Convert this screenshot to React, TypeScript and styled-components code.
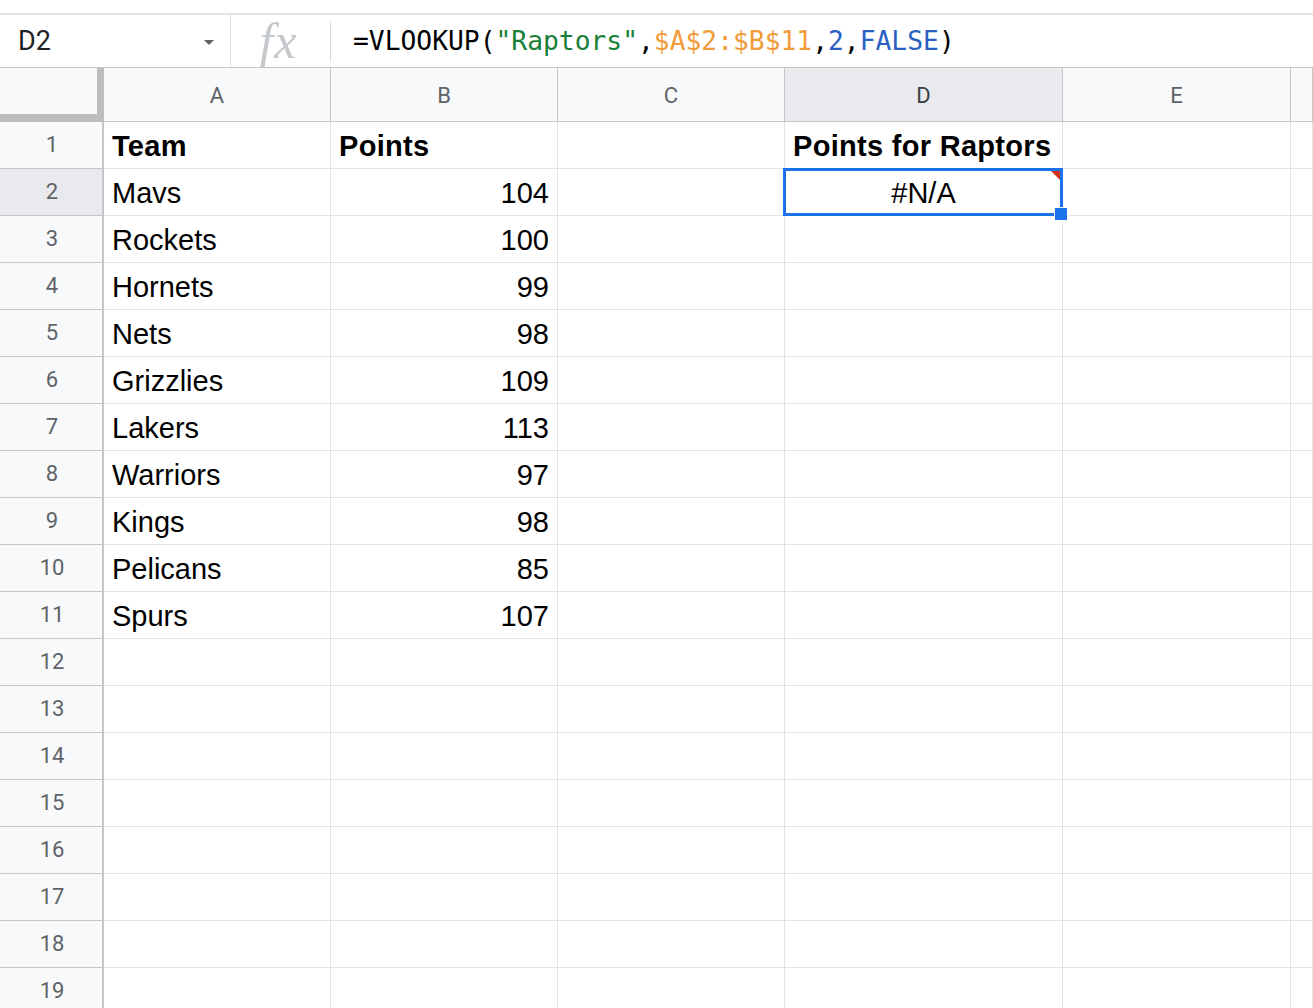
import React from 'react';
import styled, { createGlobalStyle } from 'styled-components';

const Global = createGlobalStyle`
  html, body { margin: 0; padding: 0; overflow: hidden; background: #ffffff; }
  body { font-family: "Liberation Sans", Arial, sans-serif; }
  * { box-sizing: border-box; }
`;

const COLS = '104px 227px 227px 227px 278px 228px 1fr';

const Page = styled.div`
  width: 1313px;
  height: 1008px;
  overflow: hidden;
  background: #fff;
  padding-top: 13px;
`;

const FormulaBar = styled.div`
  display: flex;
  align-items: stretch;
  height: 54px;
  border-top: 2px solid #e1e3e6;
`;

const NameBox = styled.div`
  width: 231px;
  display: flex;
  align-items: center;
  justify-content: space-between;
  padding: 0 16px 0 18px;
  border-right: 1px solid #dadce0;
  font-family: Roboto, "Liberation Sans", sans-serif;
  font-size: 27px;
  color: #202124;
`;

const Caret = styled.span`
  width: 0;
  height: 0;
  border-left: 5px solid transparent;
  border-right: 5px solid transparent;
  border-top: 5px solid #5f6368;
  margin-top: 3px;
`;

const FxBox = styled.div`
  width: 99px;
  display: flex;
  align-items: center;
  justify-content: center;
  padding-right: 4px;
  font-family: "Liberation Serif", "Times New Roman", serif;
  font-style: italic;
  font-size: 50px;
  color: #c4c7cb;
  letter-spacing: 1px;
`;

const Divider = styled.div`
  width: 1px;
  align-self: center;
  height: 40px;
  margin-top: 2px;
  background: #dadce0;
`;

const Formula = styled.div`
  flex: 1;
  display: flex;
  align-items: center;
  padding-left: 22px;
  font-family: "DejaVu Sans Mono", "Liberation Mono", monospace;
  font-size: 26.3px;
  color: #000;
  white-space: pre;
`;

const Tok = styled.span<{ $kind: 'str' | 'ref' | 'num' }>`
  color: ${(p) => (p.$kind === 'str' ? '#188038' : p.$kind === 'ref' ? '#f19b3a' : '#2a5fc4')};
`;

const Row = styled.div<{ $header?: boolean }>`
  display: grid;
  grid-template-columns: ${COLS};
  height: ${(p) => (p.$header ? '55px' : '47px')};
  ${(p) => (p.$header ? 'border-top: 1px solid #c4c7c5;' : '')}
`;

const Corner = styled.div`
  background: #f8f9fa;
  border-right: 7px solid #bdbdbd;
  border-bottom: 8px solid #bdbdbd;
`;

const ColHead = styled.div<{ $active?: boolean }>`
  display: flex;
  align-items: center;
  justify-content: center;
  background: ${(p) => (p.$active ? '#e8eaed' : '#f8f9fa')};
  border-right: 1px solid #c4c7c5;
  border-bottom: 1px solid #c4c7c5;
  font-family: Roboto, "Liberation Sans", sans-serif;
  font-size: 22px;
  color: ${(p) => (p.$active ? '#3c4043' : '#5f6368')};
  padding-top: 1px;
`;

const RowHead = styled.div<{ $active?: boolean }>`
  display: flex;
  align-items: center;
  justify-content: center;
  background: ${(p) => (p.$active ? '#e8eaed' : '#f8f9fa')};
  border-right: 2px solid #c4c7c5;
  border-bottom: 1px solid #c4c7c5;
  font-family: Roboto, "Liberation Sans", sans-serif;
  font-size: 22px;
  color: #5f6368;
  padding-left: 2px;
  padding-bottom: 2px;
`;

const Cell = styled.div<{ $align?: 'left' | 'right' | 'center'; $bold?: boolean }>`
  position: relative;
  display: flex;
  align-items: flex-end;
  justify-content: ${(p) =>
    p.$align === 'right' ? 'flex-end' : p.$align === 'center' ? 'center' : 'flex-start'};
  padding: 0 8px 5px 8px;
  border-right: 1px solid #e2e3e3;
  border-bottom: 1px solid #e2e3e3;
  font-family: "Liberation Sans", Arial, sans-serif;
  font-size: 29px;
  line-height: 33px;
  font-weight: ${(p) => (p.$bold ? 700 : 400)};
  letter-spacing: ${(p) => (p.$bold ? '0.3px' : '0')};
  color: #000;
  white-space: nowrap;
`;

const Selection = styled.div`
  position: absolute;
  z-index: 2;
  left: -2px;
  top: -1px;
  right: -1px;
  bottom: -1px;
  border: 3px solid #1a73e8;
  pointer-events: none;
`;

const ErrorFlag = styled.span`
  position: absolute;
  top: 0;
  right: 0;
  width: 0;
  height: 0;
  border-top: 9px solid #d93025;
  border-left: 9px solid transparent;
`;

const Handle = styled.span`
  position: absolute;
  right: -8px;
  bottom: -8px;
  width: 14px;
  height: 14px;
  background: #1a73e8;
  border: 1px solid #ffffff;
`;

const teams: [string, number][] = [
  ['Mavs', 104],
  ['Rockets', 100],
  ['Hornets', 99],
  ['Nets', 98],
  ['Grizzlies', 109],
  ['Lakers', 113],
  ['Warriors', 97],
  ['Kings', 98],
  ['Pelicans', 85],
  ['Spurs', 107],
];

const letters = ['A', 'B', 'C', 'D', 'E', ''];

export default function App() {
  const rows = Array.from({ length: 19 }, (_, i) => i + 1);
  return (
    <Page>
      <Global />
      <FormulaBar>
        <NameBox>
          <span>D2</span>
          <Caret />
        </NameBox>
        <FxBox>fx</FxBox>
        <Divider />
        <Formula>
          =VLOOKUP(<Tok $kind="str">"Raptors"</Tok>,<Tok $kind="ref">$A$2:$B$11</Tok>,
          <Tok $kind="num">2</Tok>,<Tok $kind="num">FALSE</Tok>)
        </Formula>
      </FormulaBar>
      <Row $header>
        <Corner />
        {letters.map((l, i) => (
          <ColHead key={i} $active={l === 'D'}>
            {l}
          </ColHead>
        ))}
      </Row>
      {rows.map((r) => {
        let a: React.ReactNode = null;
        let b: React.ReactNode = null;
        let d: React.ReactNode = null;
        if (r === 1) {
          a = 'Team';
          b = 'Points';
          d = 'Points for Raptors';
        } else if (r <= 11) {
          a = teams[r - 2][0];
          b = teams[r - 2][1];
        }
        const sel = r === 2;
        return (
          <Row key={r}>
            <RowHead $active={sel}>{r}</RowHead>
            <Cell $bold={r === 1}>{a}</Cell>
            <Cell $bold={r === 1} $align={r === 1 ? 'left' : 'right'}>
              {b}
            </Cell>
            <Cell />
            <Cell $bold={r === 1} $align={sel ? 'center' : 'left'}>
              {sel ? '#N/A' : d}
              {sel && (
                <Selection>
                  <ErrorFlag />
                  <Handle />
                </Selection>
              )}
            </Cell>
            <Cell />
            <Cell />
          </Row>
        );
      })}
    </Page>
  );
}
